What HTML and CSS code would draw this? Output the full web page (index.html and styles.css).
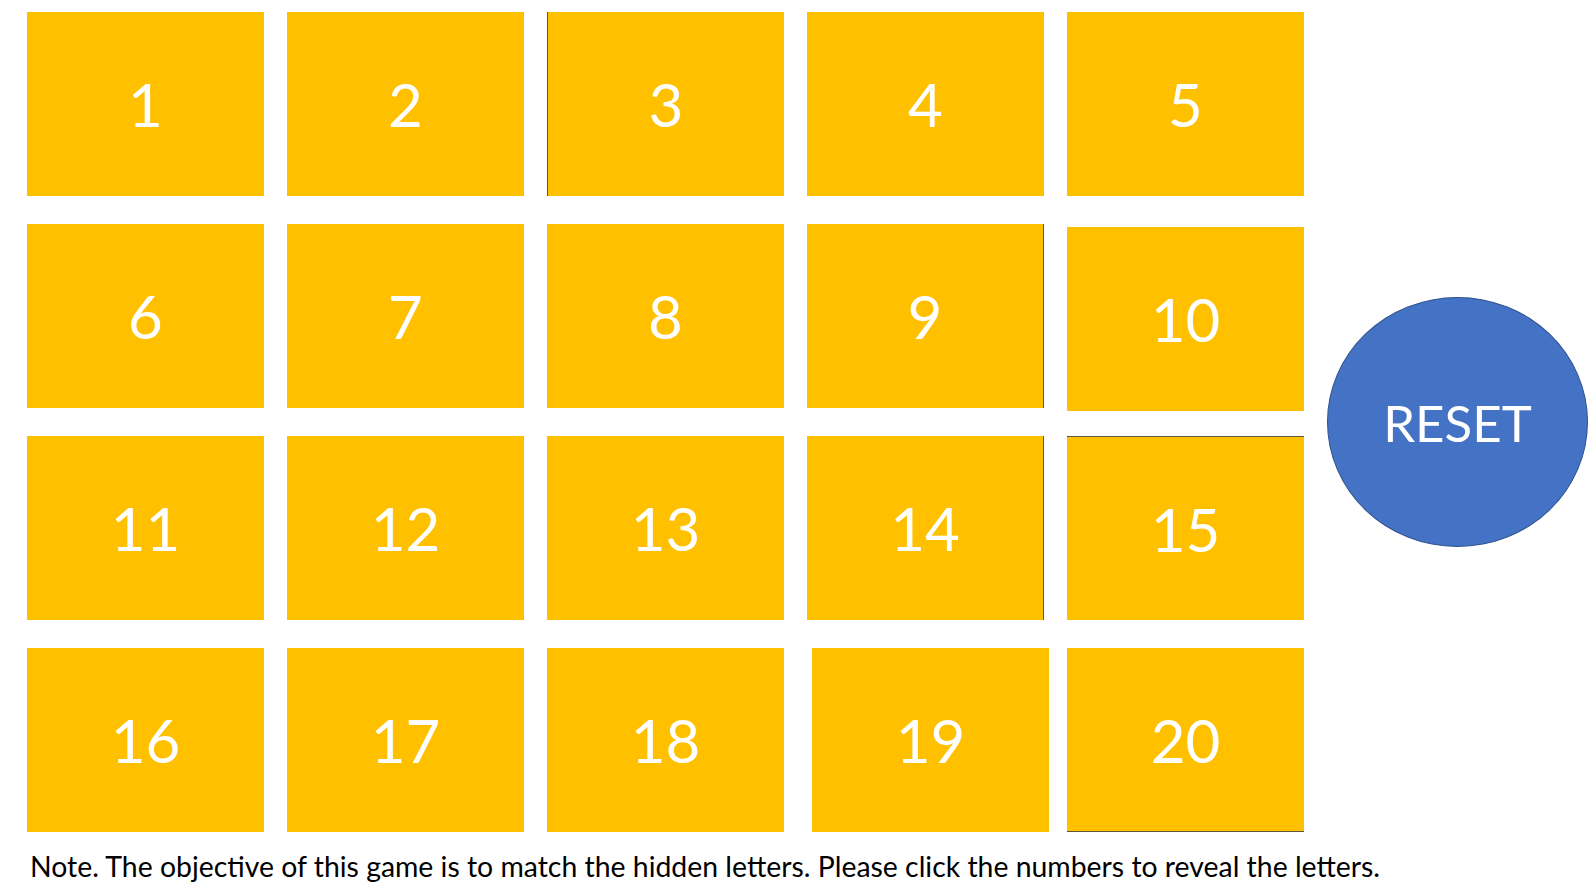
FILE: index.html
```html
<!DOCTYPE html>
<html lang="en">
<head>
    <meta charset="UTF-8">
    <meta name="viewport" content="width=device-width, initial-scale=1.0">
    <title>Memory Match</title>
    <link rel="stylesheet" href="styles.css">
</head>
<body>
    <div id="board">
        <div id="tile-grid">
            <div class="tile">1</div>
            <div class="tile">2</div>
            <div class="tile edge-left">3</div>
            <div class="tile">4</div>
            <div class="tile">5</div>
            <div class="tile">6</div>
            <div class="tile">7</div>
            <div class="tile">8</div>
            <div class="tile edge-right">9</div>
            <div class="tile shift-down">10</div>
            <div class="tile">11</div>
            <div class="tile">12</div>
            <div class="tile">13</div>
            <div class="tile edge-right">14</div>
            <div class="tile edge-top">15</div>
            <div class="tile">16</div>
            <div class="tile">17</div>
            <div class="tile">18</div>
            <div class="tile shift-right">19</div>
            <div class="tile edge-bottom">20</div>
        </div>
        <button id="reset-button">RESET</button>
    </div>
    <p id="note">Note. The objective of this game is to match the hidden letters. Please click the numbers to reveal the letters.</p>
</body>
</html>
```

FILE: styles.css
```css
body, html {
    margin: 0;
    padding: 0;
    background-color: #ffffff;
    font-family: Lato, "Open Sans", sans-serif;
}
#board {
    display: flex;
    align-items: center;
    gap: 23px;
    padding: 12px 0 0 27px;
}
#tile-grid {
    display: grid;
    grid-template-columns: repeat(5, 237px);
    grid-template-rows: repeat(4, 184px);
    column-gap: 23px;
    row-gap: 28px;
}
.tile {
    width: 237px;
    height: 184px;
    box-sizing: border-box;
    background-color: #ffc000;
    color: #ffffff;
    font-size: 60px;
    display: flex;
    align-items: center;
    justify-content: center;
    cursor: pointer;
}
.tile.edge-left {
    border-left: 1px solid #5a5a3a;
}
.tile.edge-right {
    border-right: 1px solid #5a5a3a;
}
.tile.edge-top {
    border-top: 1px solid #5a5a3a;
}
.tile.edge-bottom {
    border-bottom: 1px solid #5a5a3a;
}
.tile.shift-down {
    margin-top: 3px;
}
.tile.shift-right {
    margin-left: 5px;
}
#reset-button {
    width: 261px;
    height: 250px;
    border-radius: 50%;
    border: 1px solid #2f528f;
    background-color: #4472c4;
    color: #ffffff;
    font-family: Lato, "Open Sans", sans-serif;
    font-size: 51px;
    padding: 0;
    cursor: pointer;
}
#note {
    margin: 17px 0 0 30px;
    font-size: 28.4px;
    color: #000000;
}
```
